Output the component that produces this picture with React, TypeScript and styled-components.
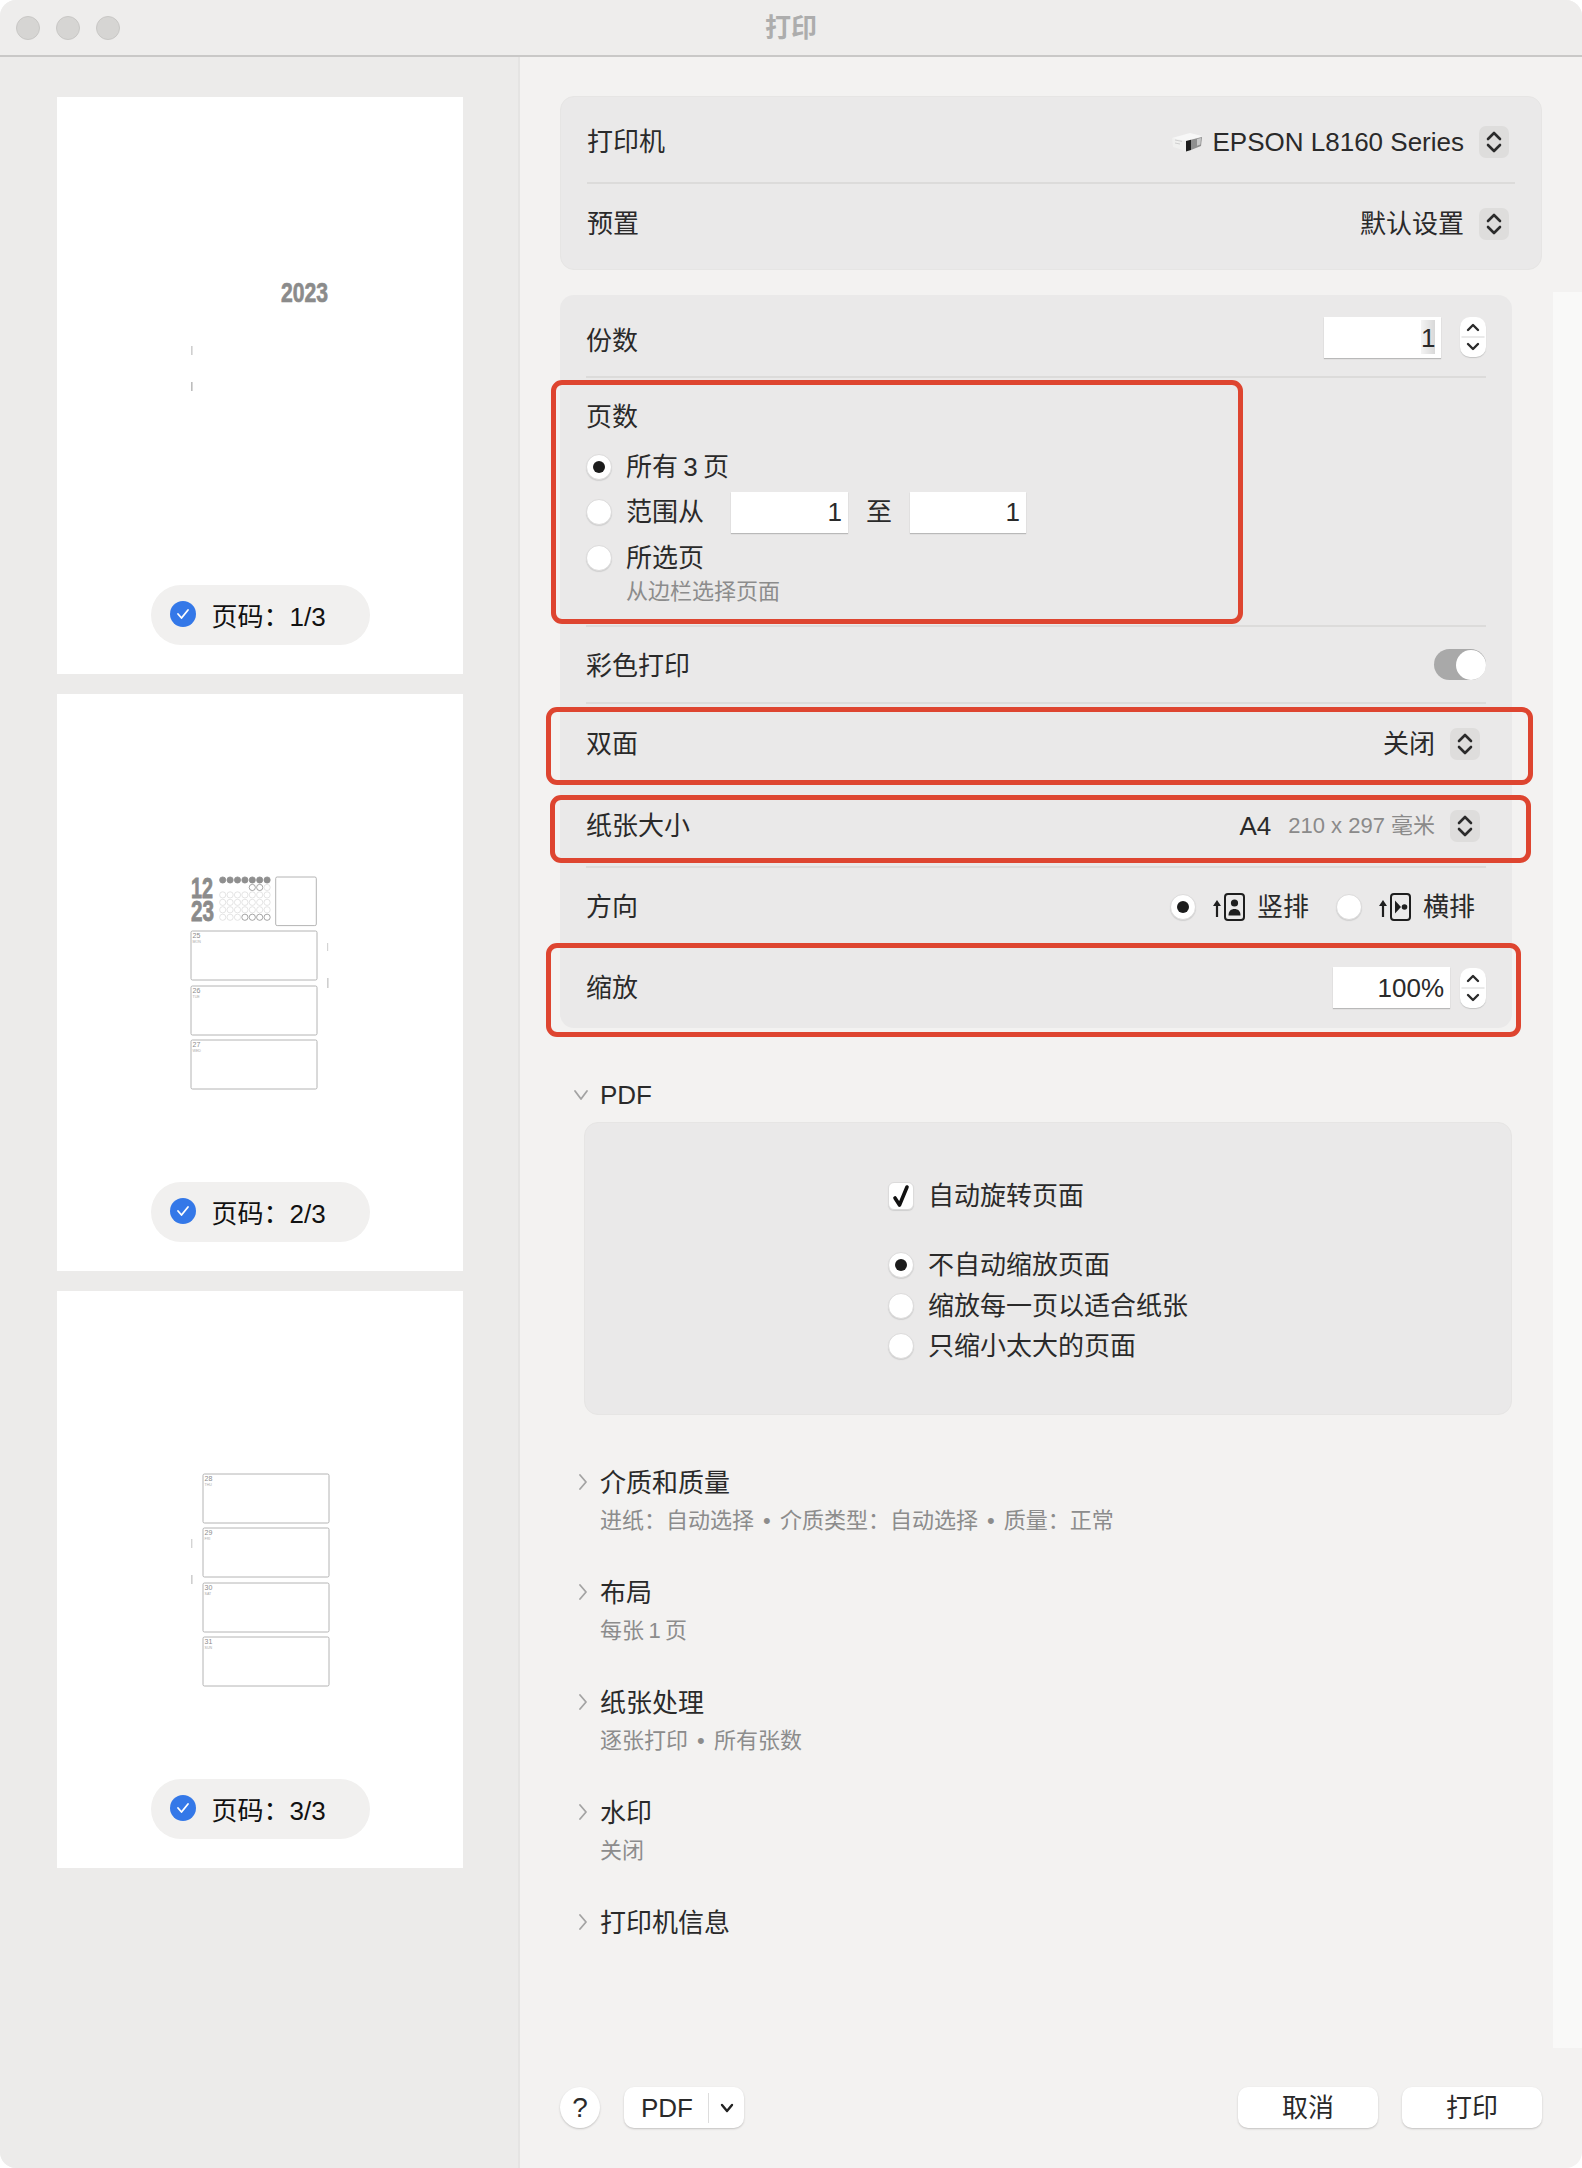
import type { FC } from "react";
import { createGlobalStyle, styled } from "styled-components";

const FONT = `"Liberation Sans", "Noto Sans CJK SC", sans-serif`;

const GlobalStyle = createGlobalStyle`
  html, body {
    margin: 0;
    background: #ffffff;
    font-family: ${FONT};
    color: #2a2a2a;
  }
  * { box-sizing: border-box; }
`;

const UpDown: FC = () => (
  <svg width="30" height="32" viewBox="0 0 30 32" fill="none" stroke="#2b2b2b" strokeWidth="2.6" strokeLinecap="round" strokeLinejoin="round">
    <path d="M9 13 15 7l6 6" />
    <path d="M9 19l6 6 6-6" />
  </svg>
);

const Chevron: FC<{ open?: boolean }> = ({ open }) => (
  <svg width="16" height="16" viewBox="0 0 16 16" fill="none" stroke="#a3a3a3" strokeWidth="1.8" strokeLinecap="round" strokeLinejoin="round">
    {open ? <path d="M2 4l6 8 6-8" /> : <path d="M5 1l6 7-6 7" />}
  </svg>
);

const PrinterIcon: FC = () => (
  <svg width="32" height="22" viewBox="0 0 32 22">
    <path d="M1 7 19 2l12 3-2 1L12 11z" fill="#f7f7f7" />
    <path d="M1 7l14 3v10L2 16z" fill="#f0f0ef" />
    <path d="M4 9l7 1.4M4 12l5 1" stroke="#cfcfcf" strokeWidth="1" />
    <path d="M15 10l5-1.2V19l-5 1.5z" fill="#1e1e1e" />
    <path d="M20 8.8 31 6l-1 9-10 4z" fill="#8f8f8f" />
    <path d="M26 8l4-1-.6 6.5-3.4 1.2z" fill="#c8c8c8" />
  </svg>
);

const OrientationIcon: FC<{ landscape?: boolean }> = ({ landscape }) => (
  <svg width="33" height="30" viewBox="0 0 33 30" fill="#1e1e1e">
    <path d="M4 25V12" stroke="#1e1e1e" strokeWidth="2.2" />
    <path d="M0 14l4-6 4 6z" />
    <rect x="12" y="2" width="19" height="26" rx="3" fill="none" stroke="#1e1e1e" strokeWidth="2" />
    {landscape ? (
      <>
        <path d="M16 8.5l6 6.5-6 6.5z" />
        <circle cx="25.5" cy="15" r="2.8" />
      </>
    ) : (
      <>
        <circle cx="21.5" cy="11" r="3.6" />
        <path d="M15.5 23.5c0-4.5 2.5-6.5 6-6.5s6 2 6 6.5z" />
      </>
    )}
  </svg>
);

const CheckMark: FC = () => (
  <svg width="20" height="25" viewBox="0 0 20 25" fill="none" stroke="#111" strokeWidth="3.6" strokeLinecap="round" strokeLinejoin="round">
    <path d="M4 14l4.5 7L16 3" />
  </svg>
);

const Tick: FC = () => (
  <svg width="14" height="12" viewBox="0 0 14 12" fill="none" stroke="#fff" strokeWidth="1.8" strokeLinecap="round" strokeLinejoin="round">
    <path d="M2 6l3.5 4L12 2" />
  </svg>
);

const thumbFont = `"Liberation Sans Narrow", "Liberation Sans", sans-serif`;

const FirstThumb: FC = () => (
  <Thumb viewBox="0 0 406 488">
    <text x="224" y="205" fontFamily={thumbFont} fontSize="27" fontWeight="700" fill="#8b8b8b" stroke="#8b8b8b" strokeWidth="0.7" textLength="47" lengthAdjust="spacingAndGlyphs">
      2023
    </text>
    <rect x="134" y="249" width="1.6" height="9" fill="#cfcfcf" />
    <rect x="134" y="285" width="1.6" height="9" fill="#bdbdbd" />
  </Thumb>
);

const Day: FC<{ x: number; y: number; kind: "full" | "ring" | "soft" }> = ({ x, y, kind }) => (
  <circle
    cx={x}
    cy={y}
    r="3.1"
    fill={kind === "full" ? "#8f8f8f" : "#fff"}
    stroke={kind === "soft" ? "#dddddd" : "#8f8f8f"}
    strokeWidth="0.8"
  />
);

const dayX = [0, 1, 2, 3, 4, 5, 6].map((i) => 165.7 + i * 7.4);
const dayY = [0, 1, 2, 3, 4, 5].map((i) => 186 + i * 7.45);

const DiaryBox: FC<{ x: number; y: number; day: string; week: string }> = ({ x, y, day, week }) => (
  <g>
    <rect x={x} y={y} width="126" height="49" rx="1.5" fill="#fff" stroke="#ababab" strokeWidth="0.9" />
    <text x={x + 1.5} y={y + 7} fontFamily={thumbFont} fontSize="7" fill="#8c8c8c">
      {day}
    </text>
    <text x={x + 1.5} y={y + 11.5} fontFamily={thumbFont} fontSize="3.6" fill="#a8a8a8">
      {week}
    </text>
  </g>
);

const SecondThumb: FC = () => (
  <Thumb viewBox="0 0 406 488">
    <text x="134" y="204" fontFamily={thumbFont} fontSize="29" fontWeight="700" fill="#8b8b8b" stroke="#8b8b8b" strokeWidth="0.8" textLength="22" lengthAdjust="spacingAndGlyphs">
      12
    </text>
    <text x="134" y="227" fontFamily={thumbFont} fontSize="29" fontWeight="700" fill="#8b8b8b" stroke="#8b8b8b" strokeWidth="0.8" textLength="23" lengthAdjust="spacingAndGlyphs">
      23
    </text>
    {dayY.map((y, row) =>
      dayX.map((x, col) => {
        let kind: "full" | "ring" | "soft" = "soft";
        if (row === 0) kind = "full";
        if (row === 1 && (col === 4 || col === 5)) kind = "ring";
        if (row === 5 && col > 2) kind = "ring";
        if (row === 1 && col < 4) return null;
        return <Day key={`${row}-${col}`} x={x} y={y} kind={kind} />;
      }),
    )}
    <rect x="218.7" y="183" width="40.6" height="48.6" rx="1.5" fill="#fff" stroke="#ababab" strokeWidth="0.9" />
    <DiaryBox x={134} y={237} day="25" week="MON" />
    <DiaryBox x={134} y={292} day="26" week="TUE" />
    <DiaryBox x={134} y={346} day="27" week="WED" />
    <rect x="270" y="249" width="1.2" height="8" fill="#d4d4d4" />
    <rect x="270" y="284" width="1.6" height="10" fill="#cfcfcf" />
  </Thumb>
);

const ThirdThumb: FC = () => (
  <Thumb viewBox="0 0 406 488">
    <DiaryBox x={146} y={183} day="28" week="THU" />
    <DiaryBox x={146} y={237} day="29" week="FRI" />
    <DiaryBox x={146} y={292} day="30" week="SAT" />
    <DiaryBox x={146} y={346} day="31" week="SUN" />
    <rect x="134" y="248" width="1.4" height="9" fill="#d4d4d4" />
    <rect x="134" y="284" width="1.6" height="9" fill="#cfcfcf" />
  </Thumb>
);

const pages = [
  { id: 1, label: "1/3", drawing: <FirstThumb /> },
  { id: 2, label: "2/3", drawing: <SecondThumb /> },
  { id: 3, label: "3/3", drawing: <ThirdThumb /> },
];

const frames = [
  { left: -9, top: 85, width: 692, height: 244 },
  { left: -14, top: 412, width: 987, height: 78 },
  { left: -10, top: 500, width: 981, height: 68 },
  { left: -14, top: 648, width: 975, height: 94 },
];

const sections = [
  { title: "介质和质量", note: "进纸\uFF1A自动选择 • 介质类型\uFF1A自动选择 • 质量\uFF1A正常" },
  { title: "布局", note: "每张\u20091\u2009页" },
  { title: "纸张处理", note: "逐张打印 • 所有张数" },
  { title: "水印", note: "关闭" },
  { title: "打印机信息" },
];

const NumberStepper: FC = () => (
  <StepperBox>
    <svg width="26" height="40" viewBox="0 0 26 40" fill="none" stroke="#2b2b2b" strokeWidth="2.4" strokeLinecap="round" strokeLinejoin="round">
      <path d="M8 13l5-5 5 5" />
      <path d="M2 20h22" stroke="#e3e3e3" strokeWidth="1.5" />
      <path d="M8 27l5 5 5-5" />
    </svg>
  </StepperBox>
);

export default function App() {
  return (
    <>
      <GlobalStyle />
      <Window>
        <TitleBar>
          <Lights>
            <Light />
            <Light />
            <Light />
          </Lights>
          <WindowTitle>打印</WindowTitle>
        </TitleBar>
        <Body>
          <Sidebar>
            {pages.map((page) => (
              <Page key={page.id}>
                {page.drawing}
                <PagePill>
                  <PageCheck>
                    <Tick />
                  </PageCheck>
                  <PillText>
                    页码{"\uFF1A"}
                    {page.label}
                  </PillText>
                </PagePill>
              </Page>
            ))}
          </Sidebar>
          <Main>
            <TopPanel>
              <Row $height={87} $pad={5}>
                <Label>打印机</Label>
                <PopupGroup $right={6}>
                  <PrinterWrap>
                    <PrinterIcon />
                    <span>EPSON L8160 Series</span>
                  </PrinterWrap>
                  <PopupButton>
                    <UpDown />
                  </PopupButton>
                </PopupGroup>
              </Row>
              <Row $height={80} $plain>
                <Label>预置</Label>
                <PopupGroup $right={6}>
                  <span>默认设置</span>
                  <PopupButton>
                    <UpDown />
                  </PopupButton>
                </PopupGroup>
              </Row>
            </TopPanel>

            <ScrollArea>
              <ScrollContent>
                <SettingsPanel>
                  <Row $height={83} $pad={3}>
                    <Label $drop={7}>份数</Label>
                    <FieldGroup>
                      <NumberField $width={117}>
                        <Selected>1</Selected>
                      </NumberField>
                      <NumberStepper />
                    </FieldGroup>
                  </Row>
                  <Row $height={249} $stack>
                    <Label>页数</Label>
                    <RadioList>
                      <RadioRow>
                        <Radio $on />
                        <span>所有{"\u2009"}3{"\u2009"}页</span>
                      </RadioRow>
                      <RadioRow>
                        <Radio />
                        <RangeLabel>范围从</RangeLabel>
                        <NumberField $width={117}>1</NumberField>
                        <RangeTo>至</RangeTo>
                        <NumberField $width={116}>1</NumberField>
                      </RadioRow>
                      <RadioRow>
                        <Radio />
                        <span>所选页</span>
                      </RadioRow>
                    </RadioList>
                    <RadioHint>从边栏选择页面</RadioHint>
                  </Row>
                  <Row $height={77}>
                    <Label $drop={3}>彩色打印</Label>
                    <Toggle>
                      <ToggleKnob />
                    </Toggle>
                  </Row>
                  <Row $height={81}>
                    <Label>双面</Label>
                    <PopupGroup $right={6}>
                      <span>关闭</span>
                      <PopupButton>
                        <UpDown />
                      </PopupButton>
                    </PopupGroup>
                  </Row>
                  <Row $height={83}>
                    <Label>纸张大小</Label>
                    <PopupGroup $right={6}>
                      <PaperSize>
                        A4<PaperDetail>210 x 297 毫米</PaperDetail>
                      </PaperSize>
                      <PopupButton>
                        <UpDown />
                      </PopupButton>
                    </PopupGroup>
                  </Row>
                  <Row $height={79}>
                    <Label>方向</Label>
                    <OrientationGroup>
                      <OrientationOption>
                        <Radio $on />
                        <OrientationIcon />
                        <span>竖排</span>
                      </OrientationOption>
                      <OrientationOption>
                        <Radio />
                        <OrientationIcon landscape />
                        <span>横排</span>
                      </OrientationOption>
                    </OrientationGroup>
                  </Row>
                  <Row $height={81} $plain>
                    <Label>缩放</Label>
                    <FieldGroup $gap={10}>
                      <NumberField $width={117}>100%</NumberField>
                      <NumberStepper />
                    </FieldGroup>
                  </Row>
                  {frames.map((frame) => (
                    <RedFrame key={frame.top} $left={frame.left} $top={frame.top} $width={frame.width} $height={frame.height} />
                  ))}
                </SettingsPanel>

                <PdfHeader>
                  <ChevronSlot $open>
                    <Chevron open />
                  </ChevronSlot>
                  <span>PDF</span>
                </PdfHeader>
                <PdfPanel>
                  <CheckRow>
                    <CheckBox>
                      <CheckMark />
                    </CheckBox>
                    <span>自动旋转页面</span>
                  </CheckRow>
                  <PdfRadios>
                    <PdfRadioRow>
                      <Radio $on />
                      <span>不自动缩放页面</span>
                    </PdfRadioRow>
                    <PdfRadioRow>
                      <Radio />
                      <span>缩放每一页以适合纸张</span>
                    </PdfRadioRow>
                    <PdfRadioRow>
                      <Radio />
                      <span>只缩小太大的页面</span>
                    </PdfRadioRow>
                  </PdfRadios>
                </PdfPanel>

                <SectionList>
                  {sections.map((section) => (
                    <Section key={section.title}>
                      <SectionHead>
                        <ChevronSlot>
                          <Chevron />
                        </ChevronSlot>
                        <span>{section.title}</span>
                      </SectionHead>
                      {section.note && <SectionNote>{section.note}</SectionNote>}
                    </Section>
                  ))}
                </SectionList>
              </ScrollContent>
              <ScrollTrack />
            </ScrollArea>

            <Footer>
              <FooterLeft>
                <HelpButton>?</HelpButton>
                <PdfButton>
                  <PdfButtonText>PDF</PdfButtonText>
                  <PdfButtonArrow>
                    <svg width="14" height="10" viewBox="0 0 14 10" fill="none" stroke="#222" strokeWidth="2.4" strokeLinecap="round" strokeLinejoin="round">
                      <path d="M2 2l5 6 5-6" />
                    </svg>
                  </PdfButtonArrow>
                </PdfButton>
              </FooterLeft>
              <FooterRight>
                <ActionButton>取消</ActionButton>
                <ActionButton>打印</ActionButton>
              </FooterRight>
            </Footer>
          </Main>
        </Body>
      </Window>
    </>
  );
}

const Window = styled.div`
  width: 1582px;
  height: 2168px;
  display: flex;
  flex-direction: column;
  border-radius: 16px;
  overflow: hidden;
  font-size: 26px;
  line-height: 30px;
  background: #f3f2f1;
`;

const TitleBar = styled.header`
  flex: none;
  height: 57px;
  display: grid;
  grid-template-columns: 1fr auto 1fr;
  align-items: center;
  background: #eeedec;
  border-bottom: 2px solid #c9c8c7;
`;

const Lights = styled.div`
  display: flex;
  gap: 16px;
  padding-left: 16px;
`;

const Light = styled.span`
  width: 24px;
  height: 24px;
  border-radius: 50%;
  background: #d6d5d3;
  border: 1px solid #c8c7c5;
`;

const WindowTitle = styled.div`
  color: #adadad;
  font-weight: 700;
  font-size: 26px;
`;

const Body = styled.div`
  flex: 1;
  display: flex;
  min-height: 0;
`;

const Sidebar = styled.aside`
  flex: none;
  width: 520px;
  padding: 40px 0 0 57px;
  display: flex;
  flex-direction: column;
  gap: 20px;
  background: #ecebea;
  border-right: 2px solid #e5e4e3;
`;

const Page = styled.div`
  width: 406px;
  height: 577px;
  display: flex;
  flex-direction: column;
  align-items: center;
  background: #ffffff;
`;

const Thumb = styled.svg`
  display: block;
  flex: none;
  width: 406px;
  height: 488px;
`;

const PagePill = styled.div`
  width: 219px;
  height: 60px;
  padding-left: 19px;
  display: flex;
  align-items: center;
  gap: 16px;
  border-radius: 30px;
  background: #f1f0ef;
  color: #111111;
`;

const PageCheck = styled.span`
  width: 26px;
  height: 26px;
  margin-top: -3px;
  display: flex;
  align-items: center;
  justify-content: center;
  border-radius: 50%;
  background: #3478e8;
`;

const PillText = styled.span`
  margin-top: 3px;
`;

const Main = styled.main`
  flex: 1;
  min-width: 0;
  padding: 39px 0 0 40px;
  display: flex;
  flex-direction: column;
`;

const TopPanel = styled.section`
  flex: none;
  width: 982px;
  height: 174px;
  border-radius: 14px;
  background: #eae9e9;
  border: 1px solid #e6e5e4;
`;

const Row = styled.div<{ $height: number; $plain?: boolean; $stack?: boolean; $pad?: number }>`
  height: ${({ $height }) => $height}px;
  margin: 0 26px;
  display: flex;
  flex-direction: ${({ $stack }) => ($stack ? "column" : "row")};
  justify-content: ${({ $stack }) => ($stack ? "flex-start" : "space-between")};
  align-items: ${({ $stack }) => ($stack ? "flex-start" : "center")};
  padding-top: ${({ $stack, $pad }) => ($stack ? 24 : ($pad ?? 0))}px;
  border-bottom: ${({ $plain }) => ($plain ? "none" : "2px solid #dcdbda")};
`;

const Label = styled.span<{ $drop?: number }>`
  margin-top: ${({ $drop }) => $drop ?? 0}px;
  color: #2a2a2a;
`;

const PopupGroup = styled.div<{ $right: number }>`
  display: flex;
  align-items: center;
  gap: 15px;
  padding-right: ${({ $right }) => $right}px;
`;

const PrinterWrap = styled.div`
  display: flex;
  align-items: center;
  gap: 10px;
`;

const PopupButton = styled.span`
  width: 30px;
  height: 32px;
  display: flex;
  align-items: center;
  justify-content: center;
  border-radius: 7px;
  background: #dedddc;
`;

const ScrollArea = styled.div`
  flex: none;
  height: 1756px;
  margin-top: 22px;
  display: flex;
`;

const ScrollContent = styled.div`
  width: 952px;
  padding-top: 3px;
  display: flex;
  flex-direction: column;
`;

const ScrollTrack = styled.div`
  width: 29px;
  margin-left: 41px;
  background: #f9f9f8;
`;

const SettingsPanel = styled.section`
  position: relative;
  flex: none;
  height: 733px;
  border-radius: 14px;
  background: #eae9e9;
`;

const RedFrame = styled.div<{ $left: number; $top: number; $width: number; $height: number }>`
  position: absolute;
  left: ${({ $left }) => $left}px;
  top: ${({ $top }) => $top}px;
  width: ${({ $width }) => $width}px;
  height: ${({ $height }) => $height}px;
  border: 5px solid #de4530;
  border-radius: 11px;
`;

const FieldGroup = styled.div<{ $gap?: number }>`
  display: flex;
  align-items: center;
  gap: ${({ $gap }) => $gap ?? 19}px;
`;

const NumberField = styled.div<{ $width: number }>`
  width: ${({ $width }) => $width}px;
  height: 41px;
  padding-right: 6px;
  display: flex;
  align-items: center;
  justify-content: flex-end;
  background: #ffffff;
  box-shadow: 0 1px 1px #b9b9b9;
`;

const Selected = styled.span`
  width: 14px;
  height: 34px;
  line-height: 36px;
  text-align: center;
  background: linear-gradient(90deg, #f4f4f4, #d8d8d8);
`;

const StepperBox = styled.span`
  width: 26px;
  height: 40px;
  display: block;
  border-radius: 10px;
  background: #ffffff;
  box-shadow: 0 1px 1px #c4c4c4;
`;

const RadioList = styled.div`
  margin-top: 12px;
  display: flex;
  flex-direction: column;
`;

const RadioRow = styled.div`
  height: 45.5px;
  display: flex;
  align-items: center;
  gap: 14px;
`;

const Radio = styled.span<{ $on?: boolean }>`
  flex: none;
  position: relative;
  width: 26px;
  height: 26px;
  border-radius: 50%;
  background: #ffffff;
  border: 1px solid #dcdbdb;
  box-shadow: 0 1px 1px #cfcfcf;

  &::after {
    content: "";
    display: ${({ $on }) => ($on ? "block" : "none")};
    position: absolute;
    left: 6px;
    top: 6px;
    width: 12px;
    height: 12px;
    border-radius: 50%;
    background: #1c1c1c;
  }
`;

const RangeLabel = styled.span`
  width: 91px;
`;

const RangeTo = styled.span`
  margin: 0 4px;
`;

const RadioHint = styled.div`
  margin: -4px 0 0 40px;
  font-size: 22px;
  color: #8c8c8c;
`;

const Toggle = styled.span`
  width: 52px;
  height: 31px;
  display: flex;
  justify-content: flex-end;
  align-items: center;
  border-radius: 16px;
  background: #a9a9a9;
`;

const ToggleKnob = styled.span`
  width: 30px;
  height: 30px;
  border-radius: 50%;
  background: #ffffff;
`;

const PaperSize = styled.span`
  display: flex;
  align-items: center;
  gap: 17px;
`;

const PaperDetail = styled.span`
  font-size: 22px;
  color: #8a8a8a;
`;

const OrientationGroup = styled.div`
  display: flex;
  align-items: center;
  gap: 27px;
  padding-right: 11px;
`;

const OrientationOption = styled.div`
  display: flex;
  align-items: center;
  gap: 11px;

  svg {
    margin-left: 6px;
  }
`;

const PdfHeader = styled.div`
  margin-top: 52px;
  display: flex;
  align-items: center;
`;

const ChevronSlot = styled.span<{ $open?: boolean }>`
  width: 40px;
  height: 30px;
  display: flex;
  align-items: flex-start;
  padding-left: ${({ $open }) => ($open ? "13px" : "15px")};
  padding-top: ${({ $open }) => ($open ? "7px" : "6px")};
`;

const PdfPanel = styled.section`
  margin: 12px 0 0 24px;
  height: 293px;
  padding: 58px 0 0 303px;
  border-radius: 14px;
  background: #eae9e9;
  border: 1px solid #e6e5e4;
`;

const CheckRow = styled.div`
  height: 30px;
  display: flex;
  align-items: center;
  gap: 14px;
`;

const CheckBox = styled.span`
  width: 26px;
  height: 28px;
  display: flex;
  align-items: center;
  justify-content: center;
  border-radius: 6px;
  background: #ffffff;
  border: 1px solid #dcdbdb;
  box-shadow: 0 1px 1px #cfcfcf;
`;

const PdfRadios = styled.div`
  margin-top: 34px;
  display: flex;
  flex-direction: column;
`;

const PdfRadioRow = styled.div`
  height: 40.5px;
  display: flex;
  align-items: center;
  gap: 14px;
`;

const SectionList = styled.div`
  margin-top: 53px;
  display: flex;
  flex-direction: column;
`;

const Section = styled.div`
  height: 110px;
`;

const SectionHead = styled.div`
  display: flex;
  align-items: center;
`;

const SectionNote = styled.div`
  margin: 9px 0 0 40px;
  font-size: 22px;
  line-height: 28px;
  word-spacing: 3px;
  color: #8c8c8c;
`;

const Footer = styled.footer`
  flex: none;
  width: 982px;
  margin-top: 39px;
  display: flex;
  justify-content: space-between;
`;

const FooterLeft = styled.div`
  display: flex;
  gap: 24px;
`;

const FooterRight = styled.div`
  display: flex;
  gap: 24px;
`;

const HelpButton = styled.span`
  width: 40px;
  height: 41px;
  display: flex;
  align-items: center;
  justify-content: center;
  border-radius: 50%;
  font-size: 28px;
  background: #ffffff;
  box-shadow: 0 1px 2px #c2c1c0;
`;

const PdfButton = styled.span`
  width: 120px;
  height: 41px;
  display: flex;
  align-items: center;
  border-radius: 10px;
  background: #ffffff;
  box-shadow: 0 1px 2px #c2c1c0;
`;

const PdfButtonText = styled.span`
  width: 85px;
  padding-left: 17px;
  border-right: 1px solid #dddddd;
`;

const PdfButtonArrow = styled.span`
  flex: 1;
  display: flex;
  justify-content: center;
`;

const ActionButton = styled.span`
  width: 140px;
  height: 41px;
  display: flex;
  align-items: center;
  justify-content: center;
  border-radius: 10px;
  background: #ffffff;
  box-shadow: 0 1px 2px #c2c1c0;
`;
